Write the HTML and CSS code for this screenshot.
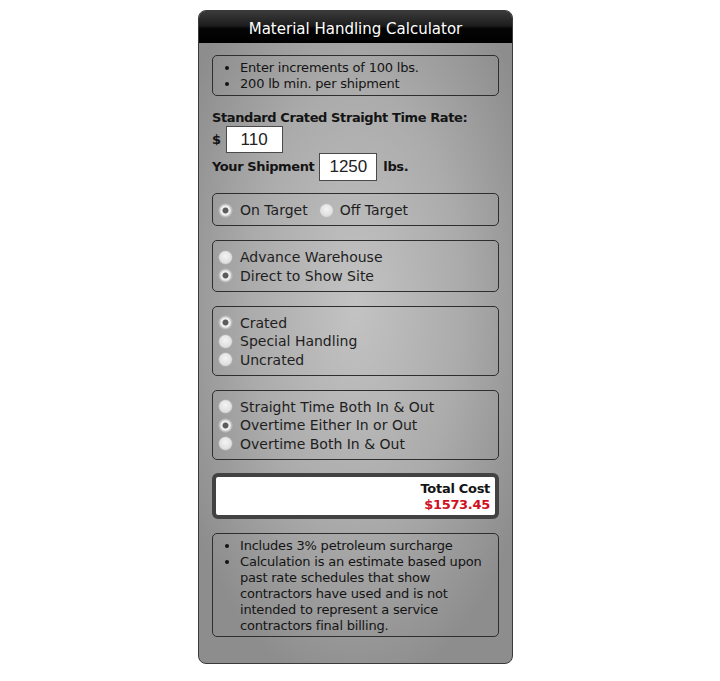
FILE: index.html
```html
<!DOCTYPE html>
<html>
<head>
<meta charset="utf-8">
<link rel="stylesheet" href="styles.css">
</head>
<body>
<div class="calc">
  <h1 class="calc-title">Material Handling Calculator</h1>
  <div class="calc-body">
    <ul class="box notes">
      <li>Enter increments of 100 lbs.</li>
      <li>200 lb min. per shipment</li>
    </ul>
    <div class="field-label">Standard Crated Straight Time Rate:</div>
    <div class="field-row">
      <span class="bold">$</span>
      <input class="num" type="text" value="110">
    </div>
    <div class="field-row">
      <span class="bold">Your Shipment</span>
      <input class="num num-wide" type="text" value="1250">
      <span class="bold">lbs.</span>
    </div>

    <div class="box radios inline">
      <label class="opt"><input type="radio" name="t" checked><span>On Target</span></label>
      <label class="opt"><input type="radio" name="t"><span>Off Target</span></label>
    </div>

    <div class="box radios">
      <label class="opt"><input type="radio" name="w"><span>Advance Warehouse</span></label>
      <label class="opt"><input type="radio" name="w" checked><span>Direct to Show Site</span></label>
    </div>

    <div class="box radios">
      <label class="opt"><input type="radio" name="c" checked><span>Crated</span></label>
      <label class="opt"><input type="radio" name="c"><span>Special Handling</span></label>
      <label class="opt"><input type="radio" name="c"><span>Uncrated</span></label>
    </div>

    <div class="box radios">
      <label class="opt"><input type="radio" name="o"><span>Straight Time Both In &amp; Out</span></label>
      <label class="opt"><input type="radio" name="o" checked><span>Overtime Either In or Out</span></label>
      <label class="opt"><input type="radio" name="o"><span>Overtime Both In &amp; Out</span></label>
    </div>

    <div class="total">
      <div class="total-label">Total Cost</div>
      <div class="total-value">$1573.45</div>
    </div>

    <ul class="box notes notes-bottom">
      <li>Includes 3% petroleum surcharge</li>
      <li>Calculation is an estimate based upon past rate schedules that show contractors have used and is not intended to represent a service contractors final billing.</li>
    </ul>
  </div>
</div>
</body>
</html>
```

FILE: styles.css
```css
html, body {
  margin: 0;
  padding: 0;
  background: #ffffff;
}

body {
  font-family: "DejaVu Sans", Verdana, sans-serif;
  font-size: 13px;
  letter-spacing: -0.2px;
  color: #141414;
}

.calc {
  width: 313px;
  margin: 10px 0 0 198px;
  border: 1px solid #3a3a3a;
  border-radius: 8px;
  overflow: hidden;
  background: radial-gradient(ellipse 62% 60% at 50% 45%, #c3c3c3 0%, #ababab 55%, #8d8d8d 100%);
}

.calc-title {
  margin: 0;
  height: 32px;
  line-height: 36px;
  text-align: center;
  font-size: 15px;
  font-weight: normal;
  letter-spacing: 0;
  color: #ffffff;
  background: linear-gradient(to bottom, #3a3a3a 0%, #1e1e1e 45%, #050505 55%, #000000 100%);
}

.calc-body {
  padding: 12px 13px 26px 13px;
}

.box {
  border: 1px solid #2e2e2e;
  border-radius: 5px;
  margin: 0;
}

.notes {
  padding: 4px 6px 3px 27px;
  line-height: 16px;
}

.notes-bottom {
  margin-top: 14px;
  padding-bottom: 2px;
}

.bold {
  font-weight: bold;
  letter-spacing: -0.4px;
}

.field-label {
  font-weight: bold;
  letter-spacing: -0.4px;
  line-height: 16px;
  margin-top: 14px;
}

.field-row {
  display: flex;
  align-items: center;
  gap: 5px;
  height: 27px;
}

.field-row .bold:last-child {
  margin-left: 1px;
}

.num {
  box-sizing: border-box;
  width: 57px;
  height: 27px;
  margin: 0;
  border: 1px solid #4a4a4a;
  background: #ffffff;
  font-family: "Liberation Sans", Arial, sans-serif;
  font-size: 17px;
  letter-spacing: 0;
  color: #222;
  text-align: center;
  padding: 0;
  outline: none;
}

.num-wide {
  width: 58px;
  height: 28px;
}

.radios {
  margin-top: 14px;
  padding: 7px 6px 5.5px 6px;
  font-size: 14px;
  letter-spacing: 0;
  color: #1e1e1e;
}

.field-row + .radios {
  margin-top: 13px;
}

.radios.inline {
  display: flex;
}

.opt {
  display: flex;
  align-items: center;
  height: 18.5px;
}

.radios.inline .opt {
  margin-right: 12px;
}

.opt input {
  appearance: none;
  -webkit-appearance: none;
  width: 13px;
  height: 13px;
  margin: 0 8px 0 0;
  border-radius: 50%;
  border: none;
  background: radial-gradient(circle at 50% 40%, #f4f4f4 0%, #e2e2e2 55%, #cfcfcf 100%);
  box-shadow: 0 0 0 0.5px #bdbdbd;
  flex: none;
}

.radios.inline .opt + .opt input {
  margin-right: 7px;
}

.opt input:checked {
  background: radial-gradient(circle, #5c5c5c 0, #5c5c5c 2.6px, #f2f2f2 3.4px, #ececec 4.6px, #c4c4c4 6px, #b8b8b8 100%);
}

.total {
  margin-top: 13px;
  border: 4px solid #424242;
  border-radius: 6px;
  background: #ffffff;
  padding: 4px 5px 2px 5px;
  text-align: right;
  font-weight: bold;
  letter-spacing: -0.3px;
  line-height: 16px;
}

.total-value {
  color: #d0101e;
}
```
